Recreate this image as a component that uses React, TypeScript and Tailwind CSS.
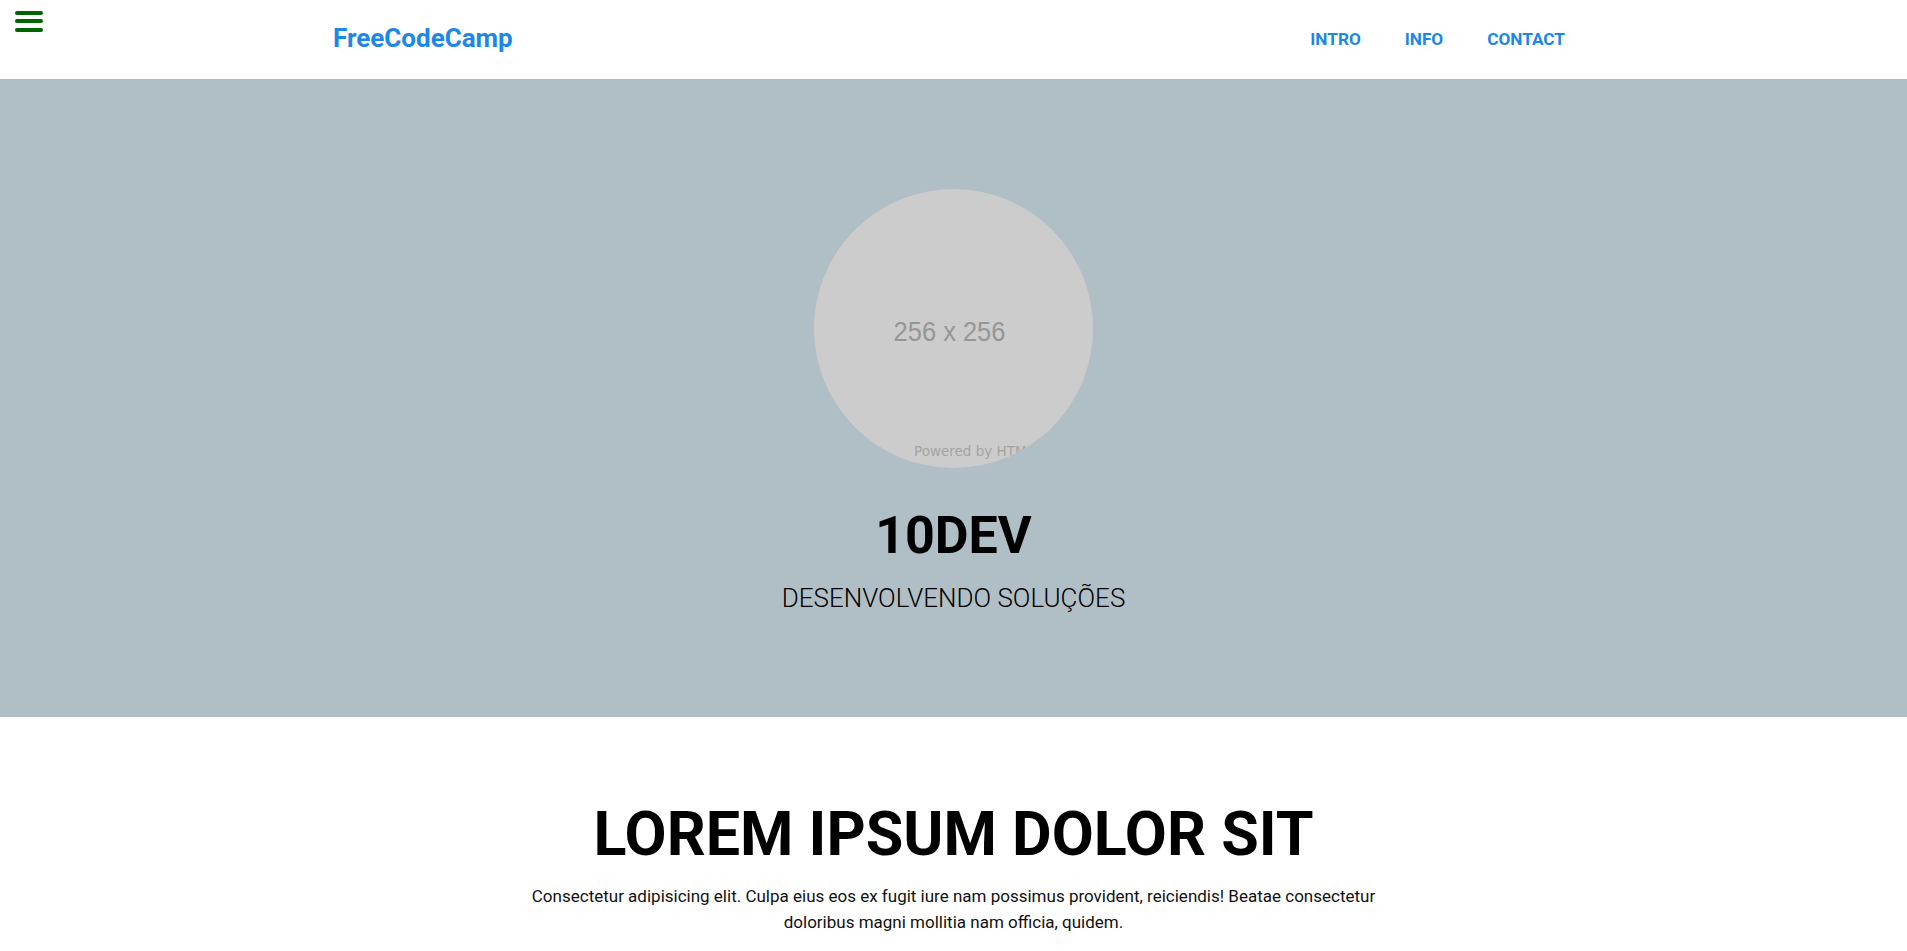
import React from 'react';

const links = ['INTRO', 'INFO', 'CONTACT'];

const App = () => {
  return (
    <div className="min-h-screen bg-white font-['Roboto',sans-serif] text-black">
      {/* Menu toggle */}
      <button className="absolute left-[15px] top-[11px] flex w-[28px] flex-col gap-[4.3px]">
        <span className="h-[4px] w-full rounded-full bg-[#006400]" />
        <span className="h-[4px] w-full rounded-full bg-[#006400]" />
        <span className="h-[4px] w-full rounded-full bg-[#006400]" />
      </button>

      {/* Header */}
      <header className="flex h-[79px] items-center justify-between pl-[333px] pr-[342px]">
        <a href="#" className="mb-[4px] text-[26px] font-bold leading-none text-[#1b87e6]">
          FreeCodeCamp
        </a>
        <nav className="flex gap-[44px]">
          {links.map((l) => (
            <a key={l} href="#" className="text-[17.2px] font-bold leading-none text-[#1b87e6]">
              {l}
            </a>
          ))}
        </nav>
      </header>

      {/* Hero */}
      <section className="flex flex-col items-center bg-[#b0bec5] pb-[106px] pt-[110px]">
        <div className="relative flex h-[279px] w-[279px] items-center justify-center overflow-hidden rounded-full bg-[#cccccc]">
          <span className="mr-[8px] mt-[6px] scale-x-[0.91] font-['Liberation_Sans',sans-serif] text-[28px] leading-none text-[#969696]">
            256 x 256
          </span>
          <span className="absolute left-[100px] top-[256px] whitespace-nowrap font-['DejaVu_Sans',sans-serif] text-[13.5px] leading-none text-[#a3a3a3]">
            Powered by HTML.COP
          </span>
        </div>
        <h1 className="mt-[42px] text-[52px] font-bold leading-none">10DEV</h1>
        <p className="mt-[23px] text-[26px] font-light leading-none">DESENVOLVENDO SOLUÇÕES</p>
      </section>

      {/* Intro */}
      <section className="flex flex-col items-center pt-[87px]">
        <h2 className="text-[61px] font-bold leading-none">LOREM IPSUM DOLOR SIT</h2>
        <p className="mt-[19px] max-w-[860px] text-center text-[17px] leading-[25.5px] text-[#111]">
          Consectetur adipisicing elit. Culpa eius eos ex fugit iure nam possimus provident, reiciendis! Beatae
          consectetur doloribus magni mollitia nam officia, quidem.
        </p>
      </section>
    </div>
  );
};

export default App;
